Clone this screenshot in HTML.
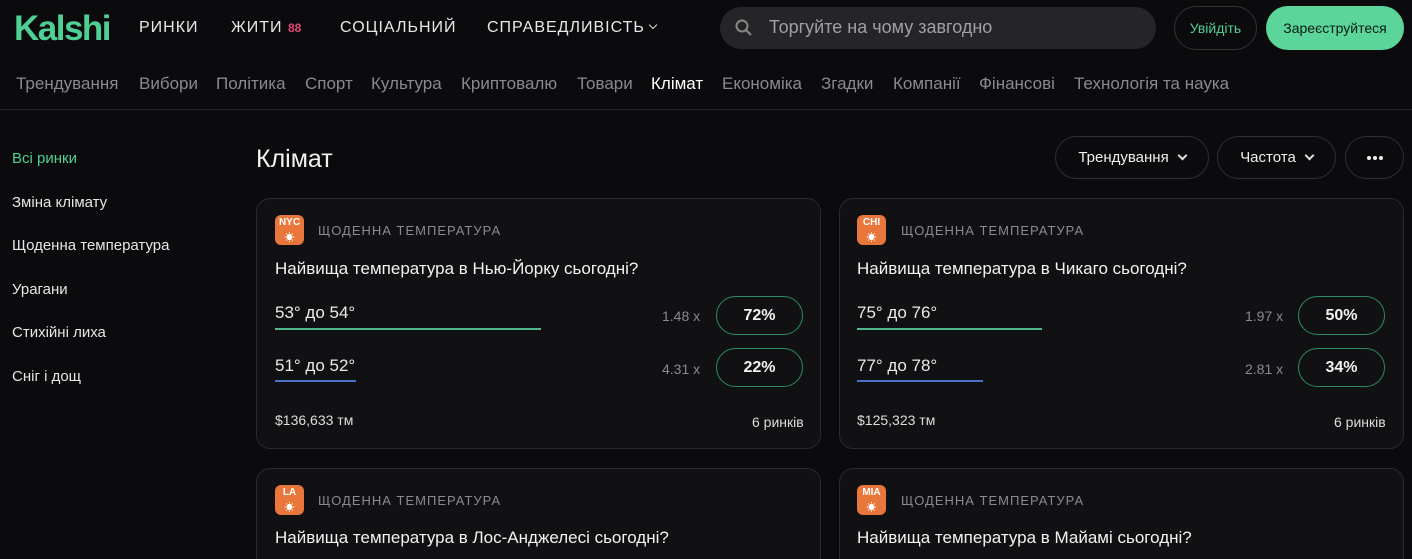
<!DOCTYPE html>
<html><head><meta charset="utf-8"><style>
*{box-sizing:border-box;margin:0;padding:0}
html,body{width:1412px;height:559px;overflow:hidden}
body{background:#0b0b0e;font-family:"Liberation Sans","Noto Sans CJK SC",sans-serif;color:#eee;position:relative}
.a{position:absolute;white-space:nowrap}
.logo{left:14px;top:9px;font-size:35px;font-weight:bold;color:#4fcf93;letter-spacing:-1.5px}
.tn{top:19px;font-size:16px;letter-spacing:1px;color:#e8e8e8}
.sn{top:74px;font-size:17px;color:#8a8a8e}
.side{left:12px;font-size:15px;color:#e6e6e6}
.pill{border:1px solid #2e2e33;border-radius:22px;height:43px;top:136px;font-size:15px;display:flex;align-items:center;justify-content:center;color:#eee}
.card{border:1px solid #2a2a2f;border-radius:14px;background:#111114;width:565px}
.ic{width:29px;height:30px;border-radius:6px;background:#e9763a;color:#fff;font-size:10px;font-weight:bold;text-align:center;line-height:16px}
.lab{font-size:13px;color:#8a8a8e;letter-spacing:1px}
.tt{font-size:17px;color:#f2f2f2}
.rt{font-size:17px;color:#eaeaea}
.mul{font-size:14px;color:#8a8a8e}
.btn{width:87px;height:39px;border:1.5px solid #2d8a63;border-radius:20px;font-size:16px;font-weight:bold;display:flex;align-items:center;justify-content:center;color:#f2f2f2}
.ft{font-size:14px;color:#ddd}
.chev{display:inline-block;width:7px;height:7px;border-right:2px solid #ddd;border-bottom:2px solid #ddd;transform:rotate(45deg);margin-left:10px;margin-top:-5px}
.dot{display:inline-block;width:4px;height:4px;border-radius:2px;background:#eee;margin:0 1px}
</style></head><body>
<div class="a logo">Kalshi</div>
<div class="a tn" style="left:139px">РИНКИ</div>
<div class="a tn" style="left:231px">ЖИТИ <span style="color:#e0457a;font-size:12px;font-weight:bold;letter-spacing:0">88</span></div>
<div class="a tn" style="left:340px">СОЦІАЛЬНИЙ</div>
<div class="a tn" style="left:487px">СПРАВЕДЛИВІСТЬ</div>
<div class="a" style="left:650px;top:22px;width:6px;height:6px;border-right:1.5px solid #ddd;border-bottom:1.5px solid #ddd;transform:rotate(45deg)"></div>
<div class="a" style="left:720px;top:7px;width:436px;height:42px;border-radius:21px;background:#252528"></div>
<svg class="a" style="left:734px;top:18px" width="20" height="20" viewBox="0 0 20 20"><circle cx="8" cy="8" r="5.5" fill="none" stroke="#888" stroke-width="2"/><path d="M12 12l5 5" stroke="#888" stroke-width="2"/></svg>
<div class="a" style="left:769px;top:17px;font-size:18px;color:#a0a0a4">Торгуйте на чому завгодно</div>
<div class="a" style="left:1174px;top:6px;width:83px;height:44px;border:1px solid #333;border-radius:22px;color:#4fcf93;font-size:14px;display:flex;align-items:center;justify-content:center">Увійдіть</div>
<div class="a" style="left:1266px;top:6px;width:138px;height:44px;background:#5bd59a;border-radius:22px;color:#0b1a12;font-size:14px;display:flex;align-items:center;justify-content:center">Зареєструйтеся</div>
<div class="a sn" style="left:16px">Трендування</div>
<div class="a sn" style="left:139px">Вибори</div>
<div class="a sn" style="left:216px">Політика</div>
<div class="a sn" style="left:305px">Спорт</div>
<div class="a sn" style="left:371px">Культура</div>
<div class="a sn" style="left:461px">Криптовалю</div>
<div class="a sn" style="left:577px">Товари</div>
<div class="a sn" style="left:651px;color:#fff">Клімат</div>
<div class="a sn" style="left:722px">Економіка</div>
<div class="a sn" style="left:821px">Згадки</div>
<div class="a sn" style="left:893px">Компанії</div>
<div class="a sn" style="left:979px">Фінансові</div>
<div class="a sn" style="left:1074px">Технологія та наука</div>
<div class="a" style="left:0;top:109px;width:1412px;height:1px;background:#232327"></div>
<div class="a side" style="top:150px;color:#4fcf93">Всі ринки</div>
<div class="a side" style="top:194px">Зміна клімату</div>
<div class="a side" style="top:237px">Щоденна температура</div>
<div class="a side" style="top:281px">Урагани</div>
<div class="a side" style="top:324px">Стихійні лиха</div>
<div class="a side" style="top:368px">Сніг і дощ</div>
<div class="a" style="left:256px;top:145px;font-size:25px;color:#f2f2f2">Клімат</div>
<div class="a pill" style="left:1055px;width:154px">Трендування<span class="chev"></span></div>
<div class="a pill" style="left:1217px;width:119px">Частота<span class="chev"></span></div>
<div class="a pill" style="left:1345px;width:59px"><span class="dot"></span><span class="dot"></span><span class="dot"></span></div>

<div class="a card" style="left:256px;top:198px;height:251px"></div>
<div class="a ic" style="left:275px;top:215px">NYC<br>☀</div>
<div class="a lab" style="left:318px;top:223px">ЩОДЕННА ТЕМПЕРАТУРА</div>
<div class="a tt" style="left:275px;top:259px">Найвища температура в Нью-Йорку сьогодні?</div>
<div class="a rt" style="left:275px;top:303px">53° до 54°</div>
<div class="a" style="left:275px;top:328px;width:266px;height:2px;background:#4fb88a"></div>
<div class="a mul" style="left:662px;top:308px">1.48 x</div>
<div class="a btn" style="left:716px;top:296px">72%</div>
<div class="a rt" style="left:275px;top:356px">51° до 52°</div>
<div class="a" style="left:275px;top:380px;width:81px;height:2px;background:#4a73c8"></div>
<div class="a mul" style="left:662px;top:361px">4.31 x</div>
<div class="a btn" style="left:716px;top:348px">22%</div>
<div class="a ft" style="left:275px;top:412px">$136,633 тм</div>
<div class="a ft" style="left:752px;top:414px">6 ринків</div>

<div class="a card" style="left:839px;top:198px;height:251px"></div>
<div class="a ic" style="left:857px;top:215px">CHI<br>☀</div>
<div class="a lab" style="left:901px;top:223px">ЩОДЕННА ТЕМПЕРАТУРА</div>
<div class="a tt" style="left:857px;top:259px">Найвища температура в Чикаго сьогодні?</div>
<div class="a rt" style="left:857px;top:303px">75° до 76°</div>
<div class="a" style="left:857px;top:328px;width:185px;height:2px;background:#4fb88a"></div>
<div class="a mul" style="left:1245px;top:308px">1.97 x</div>
<div class="a btn" style="left:1298px;top:296px">50%</div>
<div class="a rt" style="left:857px;top:356px">77° до 78°</div>
<div class="a" style="left:857px;top:380px;width:126px;height:2px;background:#4a73c8"></div>
<div class="a mul" style="left:1245px;top:361px">2.81 x</div>
<div class="a btn" style="left:1298px;top:348px">34%</div>
<div class="a ft" style="left:857px;top:412px">$125,323 тм</div>
<div class="a ft" style="left:1334px;top:414px">6 ринків</div>

<div class="a card" style="left:256px;top:468px;height:91px;border-bottom:none;border-radius:14px 14px 0 0"></div>
<div class="a ic" style="left:275px;top:485px">LA<br>☀</div>
<div class="a lab" style="left:318px;top:493px">ЩОДЕННА ТЕМПЕРАТУРА</div>
<div class="a tt" style="left:275px;top:528px">Найвища температура в Лос-Анджелесі сьогодні?</div>
<div class="a card" style="left:839px;top:468px;height:91px;border-bottom:none;border-radius:14px 14px 0 0"></div>
<div class="a ic" style="left:857px;top:485px">MIA<br>☀</div>
<div class="a lab" style="left:901px;top:493px">ЩОДЕННА ТЕМПЕРАТУРА</div>
<div class="a tt" style="left:857px;top:528px">Найвища температура в Майамі сьогодні?</div>
</body></html>
